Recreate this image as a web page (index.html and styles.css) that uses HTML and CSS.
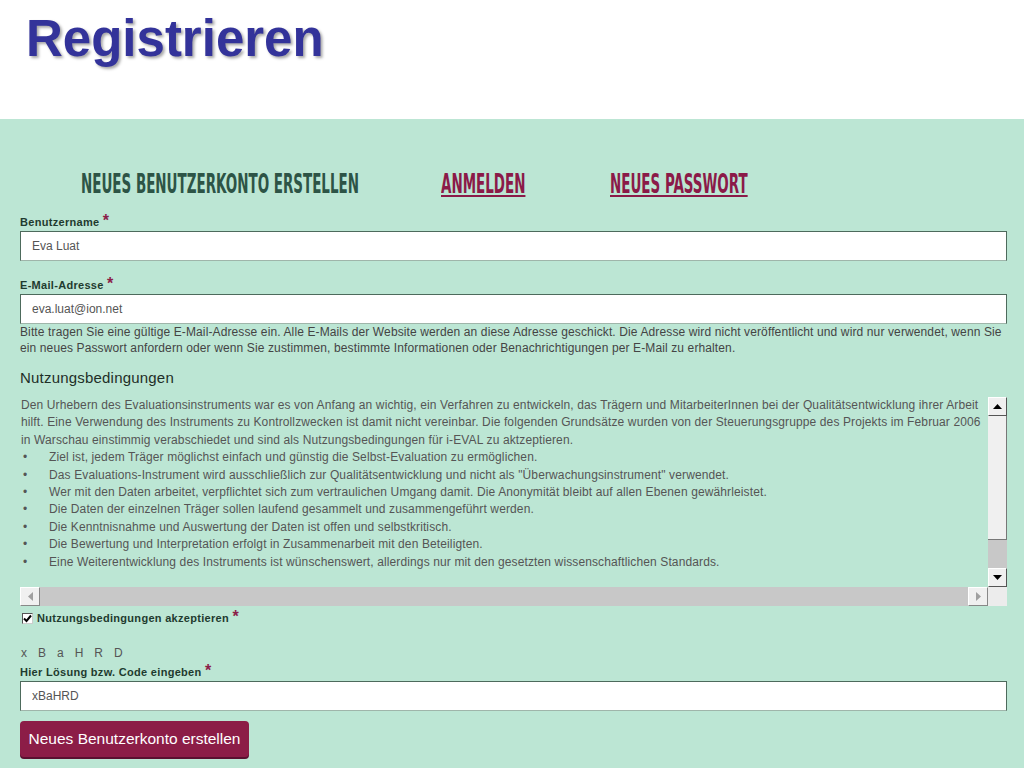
FILE: index.html
```html
<!DOCTYPE html>
<html>

	<head>
		<meta charset="UTF-8">
		<title>Registrieren</title>
		<link rel="stylesheet" href="styles.css">
	</head>

	<body>
		<div class="head">
			<h1>Registrieren</h1>
		</div>
		<div class="main">
			<!--Reiter-->
			<div class="tabs">
				<a class="tab tab1 active" href="##"><span>Neues Benutzerkonto erstellen</span></a>
				<a class="tab tab2" href="##"><span>Anmelden</span></a>
				<a class="tab tab3" href="##"><span>Neues Passwort</span></a>
			</div>

			<div class="field first">
				<label for="name">Benutzername <span class="req">*</span></label>
				<input type="text" id="name" value="Eva Luat" />
			</div>
			<div class="field">
				<label for="mail">E-Mail-Adresse <span class="req">*</span></label>
				<input type="text" id="mail" value="eva.luat@ion.net" />
				<p class="desc">Bitte tragen Sie eine gültige E-Mail-Adresse ein. Alle E-Mails der Website werden an diese Adresse geschickt. Die Adresse wird nicht veröffentlicht und wird nur verwendet, wenn Sie ein neues Passwort anfordern oder wenn Sie zustimmen, bestimmte Informationen oder Benachrichtigungen per E-Mail zu erhalten.</p>
			</div>

			<h3 class="terms-title">Nutzungsbedingungen</h3>
			<div class="terms">
				<div class="terms-text">
					<div class="line">Den Urhebern des Evaluationsinstruments war es von Anfang an wichtig, ein Verfahren zu entwickeln, das Trägern und MitarbeiterInnen bei der Qualitätsentwicklung ihrer Arbeit</div>
					<div class="line">hilft. Eine Verwendung des Instruments zu Kontrollzwecken ist damit nicht vereinbar. Die folgenden Grundsätze wurden von der Steuerungsgruppe des Projekts im Februar 2006</div>
					<div class="line">in Warschau einstimmig verabschiedet und sind als Nutzungsbedingungen für i-EVAL zu aktzeptieren.</div>
					<div class="line li">Ziel ist, jedem Träger möglichst einfach und günstig die Selbst-Evaluation zu ermöglichen.</div>
					<div class="line li">Das Evaluations-Instrument wird ausschließlich zur Qualitätsentwicklung und nicht als "Überwachungsinstrument" verwendet.</div>
					<div class="line li">Wer mit den Daten arbeitet, verpflichtet sich zum vertraulichen Umgang damit. Die Anonymität bleibt auf allen Ebenen gewährleistet.</div>
					<div class="line li">Die Daten der einzelnen Träger sollen laufend gesammelt und zusammengeführt werden.</div>
					<div class="line li">Die Kenntnisnahme und Auswertung der Daten ist offen und selbstkritisch.</div>
					<div class="line li">Die Bewertung und Interpretation erfolgt in Zusammenarbeit mit den Beteiligten.</div>
					<div class="line li">Eine Weiterentwicklung des Instruments ist wünschenswert, allerdings nur mit den gesetzten wissenschaftlichen Standards.</div>
				</div>
				<!--Bildlaufleiste senkrecht-->
				<div class="vbar">
					<div class="sbtn">
						<svg width="9" height="5" viewBox="0 0 9 5"><path d="M0 5 L4.5 0 L9 5 Z" fill="#000"/></svg>
					</div>
					<div class="vthumb"></div>
					<div class="vtrack"></div>
					<div class="sbtn">
						<svg width="9" height="5" viewBox="0 0 9 5"><path d="M0 0 L9 0 L4.5 5 Z" fill="#000"/></svg>
					</div>
				</div>
				<!--Bildlaufleiste waagerecht-->
				<div class="hbar">
					<div class="sbtn">
						<svg width="5" height="9" viewBox="0 0 5 9"><path d="M5 0 L0 4.5 L5 9 Z" fill="#a0a0a0"/></svg>
					</div>
					<div class="htrack"></div>
					<div class="sbtn">
						<svg width="5" height="9" viewBox="0 0 5 9"><path d="M0 0 L5 4.5 L0 9 Z" fill="#a0a0a0"/></svg>
					</div>
				</div>
				<div class="corner"></div>
			</div>

			<div class="check">
				<span class="box">
					<svg width="9" height="9" viewBox="0 0 9 9"><path d="M1 4.5 L3.5 7 L8 1.5" stroke="#000" stroke-width="2" fill="none"/></svg>
				</span>
				<label>Nutzungsbedingungen akzeptieren <span class="req">*</span></label>
			</div>

			<div class="captcha">xBaHRD</div>
			<div class="field code">
				<label for="code">Hier Lösung bzw. Code eingeben <span class="req">*</span></label>
				<input type="text" id="code" value="xBaHRD" />
			</div>

			<button class="submit">Neues Benutzerkonto erstellen</button>
		</div>
	</body>

</html>
```
FILE: styles.css
```css
* {
	margin: 0;
	padding: 0;
}

body {
	font-family: "Liberation Sans", Arial, sans-serif;
	background: #fff;
}

.head {
	height: 119px;
	background: #fff;
}

.head h1 {
	padding: 11px 0 0 26px;
	font-size: 51px;
	line-height: 56px;
	font-weight: 700;
	color: #33339a;
	text-shadow: 2px 2px 3px rgba(0, 0, 0, .35);
}

.main {
	background: #bce6d4;
	padding: 52px 17px 11px 20px;
}

/*Reiter*/
.tabs {
	display: flex;
	padding-left: 61px;
	height: 26px;
}

.tab {
	display: block;
	margin-right: 84px;
	font-family: "DejaVu Sans Condensed", "DejaVu Sans", sans-serif;
	font-stretch: condensed;
	font-weight: 700;
	font-size: 26px;
	line-height: 26px;
	text-transform: uppercase;
	white-space: nowrap;
	color: #8b1a48;
	text-decoration: none;
}

.tab span {
	display: inline-block;
	transform-origin: left center;
	transform: scaleX(.575);
	text-decoration: underline;
	text-decoration-thickness: 2px;
	text-underline-offset: 2px;
}

.tab1 {
	width: 276px;
}

.tab2 {
	width: 85px;
}

.tab3 {
	width: 138px;
}

.tab.active {
	color: #2d5446;
}

.tab.active span {
	text-decoration: none;
}

/*Formular*/
.field {
	padding-top: 17px;
}

.field.first {
	padding-top: 18px;
}

.field label,
.check label {
	display: block;
	font-size: 11px;
	line-height: 14px;
	font-weight: 700;
	letter-spacing: .3px;
	color: #1f3b2f;
	margin-bottom: 2px;
}

.req {
	font-size: 16px;
	line-height: 10px;
	color: #8b2048;
	letter-spacing: 0;
}

.field input {
	display: block;
	width: 100%;
	height: 30px;
	box-sizing: border-box;
	border: 1px solid #4d6a5c;
	border-bottom-color: #9fb5aa;
	padding: 0 11px;
	font-family: "Liberation Sans", Arial, sans-serif;
	font-size: 12px;
	color: #555;
	background: #fff;
	outline: none;
}

.desc {
	font-size: 12px;
	line-height: 16px;
	letter-spacing: .12px;
	color: #444;
}

.terms-title {
	margin-top: 13px;
	font-size: 15px;
	line-height: 18px;
	font-weight: 400;
	letter-spacing: .2px;
	color: #1f2f28;
	margin-bottom: 10px;
}

/*Nutzungsbedingungen Kasten*/
.terms {
	display: grid;
	grid-template-columns: 1fr 19px;
	grid-template-rows: 190px 19px;
	width: 987px;
}

.terms-text {
	overflow: hidden;
	font-size: 12px;
	line-height: 17.4px;
	letter-spacing: .12px;
	color: #555;
	padding-left: 1px;
}

.terms-text .line {
	white-space: nowrap;
}

.terms-text .li {
	position: relative;
	padding-left: 28px;
}

.terms-text .li:before {
	content: "•";
	position: absolute;
	left: 2px;
	top: 0;
}

.sbtn {
	width: 19px;
	height: 19px;
	box-sizing: border-box;
	background: #f0f0f0;
	border: 1px solid #fff;
	border-right-color: #555;
	border-bottom-color: #555;
	display: flex;
	align-items: center;
	justify-content: center;
}

.vbar {
	display: flex;
	flex-direction: column;
}

.vthumb {
	height: 123px;
	background: #f0f0f0;
	border-right: 1px solid #777;
	border-bottom: 1px solid #777;
}

.vtrack {
	flex: 1;
	background: #c8c8c8;
}

.hbar {
	display: flex;
}

.hbar .sbtn {
	width: 20px;
	border-right-color: #888;
	border-bottom-color: #888;
}

.htrack {
	flex: 1;
	background: #c8c8c8;
}

.corner {
	background: #ececec;
}

.check {
	display: flex;
	align-items: center;
	margin-top: 5px;
	padding-left: 2px;
}

.check .box {
	width: 11px;
	height: 11px;
	box-sizing: border-box;
	border: 1px solid #555;
	border-right-color: #ccc;
	border-bottom-color: #ccc;
	background: #fff;
	display: flex;
	align-items: center;
	justify-content: center;
	margin-right: 4px;
}

.check label {
	margin-bottom: 0;
}

.captcha {
	margin-top: 21px;
	font-size: 12px;
	line-height: 14px;
	letter-spacing: 11px;
	color: #555;
	padding-left: 1px;
}

.field.code {
	padding-top: 5px;
}

.submit {
	display: block;
	margin-top: 10px;
	width: 229px;
	height: 36px;
	border: 0;
	border-radius: 4px;
	background: #8c1d47;
	box-shadow: 0 2px 0 #5a1030;
	color: #fff;
	font-family: "Liberation Sans", Arial, sans-serif;
	font-size: 15.5px;
	cursor: pointer;
}
```
